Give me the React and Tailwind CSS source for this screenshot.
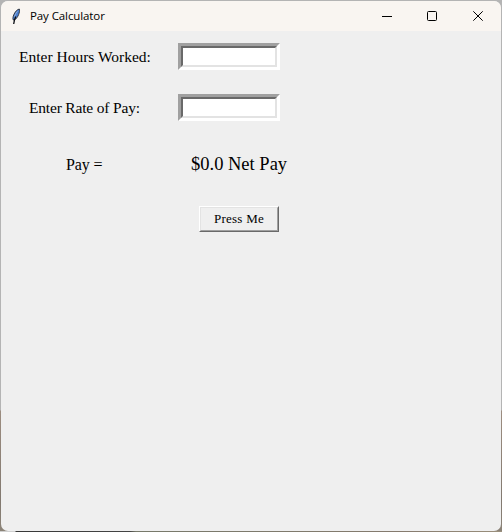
const Feather = () => (
  <svg className="block h-[17px] w-[12px]" viewBox="0 0 12 17">
    <path d="M9.300 1C7 1.600 5 3.800 3.700 7c-.7 1.700-1 3.200-.7 4.700l1.400.4c2-1.400 3.300-3.200 4.200-5.500.8-2 1.200-3.900.7-5.600z" fill="#4a7fd0" stroke="#252932" strokeWidth=".9" />
    <path d="M5.800 8.500C4.800 10.500 4.100 13 3.700 16" fill="none" stroke="#0c0e14" strokeWidth="1.300" />
    <path d="M7.500 3.200C6.200 4.600 5.200 6.400 4.500 8.600" fill="none" stroke="#9fb8dc" strokeWidth=".8" />
  </svg>
);

const Entry = ({ label }) => (
  <div className="h-[27px] w-[102px] border-[3px] border-t-[#a0a0a0] border-r-white border-b-white border-l-[#a0a0a0]">
    <input
      aria-label={label}
      className="block h-full w-full border-2 border-t-[#696969] border-r-[#e3e3e3] border-b-[#e3e3e3] border-l-[#696969] bg-white outline-none"
    />
  </div>
);

const TitleBar = () => (
  <header className="flex h-[30px] items-center bg-[#f9f5f1]">
    <div className="flex flex-1 items-center gap-[8px] pl-[9px]">
      <Feather />
      <span className="font-['Open_Sans',sans-serif] text-[11.500px] leading-4 tracking-[-0.1px] text-black">Pay Calculator</span>
    </div>
    <div className="flex">
      <button aria-label="Minimize" className="flex h-[30px] w-[45px] items-center justify-center">
        <svg className="h-[10px] w-[10px]" viewBox="0 0 10 10"><path d="M0 5.500h10" stroke="#000" /></svg>
      </button>
      <button aria-label="Maximize" className="flex h-[30px] w-[45px] items-center justify-center">
        <svg className="h-[10px] w-[10px]" viewBox="0 0 10 10"><rect x=".5" y=".5" width="9" height="9" rx="1" fill="none" stroke="#000" /></svg>
      </button>
      <button aria-label="Close" className="flex h-[30px] w-[47px] items-center justify-center">
        <svg className="h-[10px] w-[10px]" viewBox="0 0 10 10"><path d="M.3.3l9.400 9.400M9.700.3L.3 9.700" stroke="#000" /></svg>
      </button>
    </div>
  </header>
);

export default function App() {
  return (
    <div className="flex h-[532px] w-[502px] flex-col bg-[linear-gradient(to_bottom,#b4b4b4_410px,#9c8d80_411px,#827970_500px,#8c8478_532px)] px-px pt-px">
      <div className="h-[530px] w-[500px] overflow-hidden rounded-[7px] bg-[#efefef] font-['Liberation_Serif',serif] text-black">
        <TitleBar />
        <main className="flex flex-col pt-3">
          <div className="flex h-[27px] items-center">
            <div className="w-[177px] pl-[18px] text-[15.500px] leading-5 whitespace-nowrap">Enter Hours Worked:</div>
            <Entry label="Hours worked" />
          </div>
          <div className="mt-6 flex h-[27px] items-center">
            <div className="w-[177px] pl-[28px] text-[15.500px] leading-5 tracking-[-0.18px] whitespace-nowrap">Enter Rate of Pay:</div>
            <Entry label="Rate of pay" />
          </div>
          <div className="mt-[30px] flex h-[27px] items-center">
            <div className="w-[190px] pl-[65px] text-base leading-5 tracking-[-0.1px] whitespace-nowrap">Pay =</div>
            <div className="pb-[2px] text-[18.500px] leading-6 whitespace-nowrap">$0.0 Net Pay</div>
          </div>
          <button className="mt-[28px] ml-[198px] h-[26px] w-[80px] border border-t-white border-r-[#696969] border-b-[#696969] border-l-white">
            <span className="flex h-full w-full items-center justify-center border border-t-[#e3e3e3] border-r-[#a0a0a0] border-b-[#a0a0a0] border-l-[#e3e3e3] text-[13px] leading-4 tracking-[0.25px] whitespace-nowrap">
              Press Me
            </span>
          </button>
        </main>
      </div>
      <div className="-mx-px h-px bg-[linear-gradient(to_right,#d0d0d0_15px,#383838_16px,#444_130px,#77796a_136px,#857a6e_400px,#9a8f7c)]" />
    </div>
  );
}
